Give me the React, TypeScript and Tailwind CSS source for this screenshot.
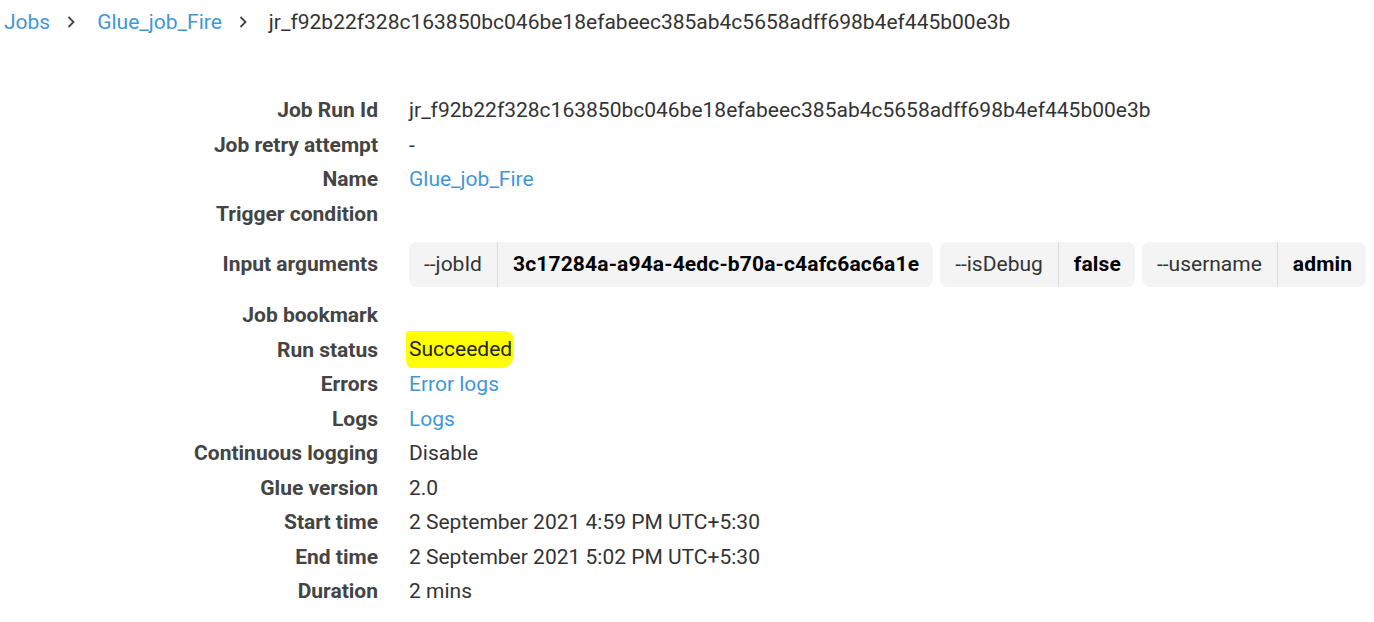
import React from "react";

interface Arg {
  key: string;
  value: string;
}

const args: Arg[] = [
  { key: "--jobId", value: "3c17284a-a94a-4edc-b70a-c4afc6ac6a1e" },
  { key: "--isDebug", value: "false" },
  { key: "--username", value: "admin" },
];

const runId = "jr_f92b22f328c163850bc046be18efabeec385ab4c5658adff698b4ef445b00e3b";

const Chevron: React.FC = () => (
  <svg className="w-[10px] h-[14px] text-[#444]" viewBox="0 0 10 14" fill="none">
    <path d="M2.5 2l5 5-5 5" stroke="currentColor" strokeWidth={1.8} />
  </svg>
);

const Row: React.FC<{ label: string; children?: React.ReactNode }> = ({ label, children }) => (
  <div className="flex h-[34.5px] items-center">
    <div className="w-[378px] shrink-0 text-right font-bold text-[#444]">{label}</div>
    <div className="ml-[31px] text-[#333]">{children}</div>
  </div>
);

const Link: React.FC<{ children: React.ReactNode }> = ({ children }) => (
  <a href="#" className="text-[#3f97d6]">
    {children}
  </a>
);

export default function App() {
  return (
    <div className="bg-white min-h-screen font-['Roboto',sans-serif] text-[21px] leading-[24px]">
      {/* Breadcrumb */}
      <div className="flex items-center pl-[4px] pt-[10px] h-[34px]">
        <Link>Jobs</Link>
        <span className="ml-[16px] mr-[21px] flex items-center">
          <Chevron />
        </span>
        <Link>Glue_job_Fire</Link>
        <span className="ml-[16px] mr-[21px] flex items-center">
          <Chevron />
        </span>
        <span className="text-[#333]">{runId}</span>
      </div>

      <div className="mt-[58.75px]">
        <Row label="Job Run Id">{runId}</Row>
        <Row label="Job retry attempt">-</Row>
        <Row label="Name">
          <Link>Glue_job_Fire</Link>
        </Row>
        <Row label="Trigger condition" />

        {/* Input arguments */}
        <div className="flex items-center py-[11px]">
          <div className="w-[378px] shrink-0 text-right font-bold text-[#444]">Input arguments</div>
          <div className="ml-[31px] flex gap-[7px]">
            {args.map((a) => (
              <div key={a.key} className="flex h-[45px] items-stretch rounded-[8px] bg-[#f4f4f4]">
                <div className="flex items-center px-[15px] text-[#333]">{a.key}</div>
                <div className="w-px bg-[#dcdcdc]" />
                <div className="flex items-center pl-[15px] pr-[14px] font-bold tracking-[0.15px] text-black">{a.value}</div>
              </div>
            ))}
          </div>
        </div>

        <Row label="Job bookmark" />
        <Row label="Run status">
          <span className="-ml-[3px] inline-block bg-[#ffff00] pl-[3px] pr-[2px] pt-[6px] pb-[7px] rounded-[3px_10px_12px_4px/3px_8px_14px_10px] text-[#222]">
            Succeeded
          </span>
        </Row>
        <Row label="Errors">
          <Link>Error logs</Link>
        </Row>
        <Row label="Logs">
          <Link>Logs</Link>
        </Row>
        <Row label="Continuous logging">Disable</Row>
        <Row label="Glue version">2.0</Row>
        <Row label="Start time">2 September 2021 4:59 PM UTC+5:30</Row>
        <Row label="End time">2 September 2021 5:02 PM UTC+5:30</Row>
        <Row label="Duration">2 mins</Row>
      </div>
    </div>
  );
}
